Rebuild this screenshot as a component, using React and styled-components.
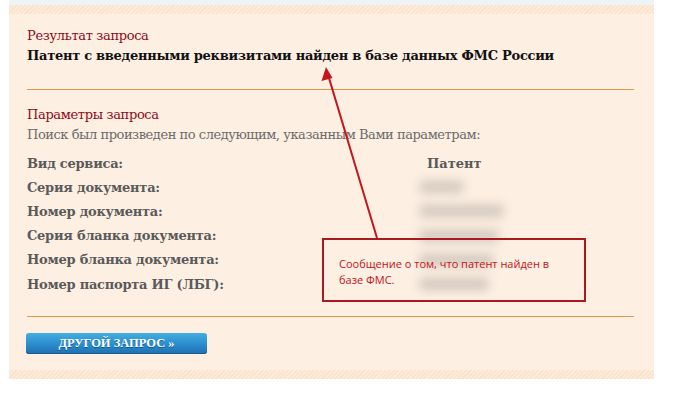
import React from 'react';
import styled, { createGlobalStyle } from 'styled-components';

const GlobalStyle = createGlobalStyle`
  html, body {
    margin: 0;
    padding: 0;
    background: #fff;
  }
`;

const hatch = `
  background: repeating-linear-gradient(
    -45deg,
    #fbe2cb 0px,
    #fbe2cb 1.5px,
    #fdebdc 1.5px,
    #fdebdc 3px
  );
`;

const Panel = styled.div`
  position: relative;
  width: 645px;
  margin-left: 9px;
  font-family: "DejaVu Serif", "Liberation Serif", serif;
`;

const TopStrip = styled.div`
  height: 5px;
  background: #eef3f5;
`;

const Hatch = styled.div`
  height: 9px;
  ${hatch}
`;

const Body = styled.div`
  background: #fdefe2;
  padding: 12px 20px 16px 18px;
`;

const SectionTitle = styled.div`
  color: #8c0c18;
  font-size: 13px;
  letter-spacing: -0.35px;
  line-height: 20px;
  margin-top: ${(p) => p.$top || 0}px;
`;

const ResultText = styled.div`
  color: #111;
  font-size: 13px;
  font-weight: bold;
  letter-spacing: -0.28px;
  line-height: 20px;
`;

const Divider = styled.div`
  height: 1px;
  background: #e39a48;
  margin-top: ${(p) => p.$top}px;
`;

const Hint = styled.div`
  color: #6b6b6b;
  font-size: 13px;
  letter-spacing: -0.45px;
  line-height: 19px;
`;

const Params = styled.div`
  display: grid;
  grid-template-columns: 400px 1fr;
  grid-auto-rows: 24.2px;
  margin-top: 7px;
  align-items: center;
`;

const Label = styled.div`
  color: #5a5a5a;
  font-size: 13px;
  font-weight: bold;
  letter-spacing: -0.25px;
`;

const Value = styled.div`
  color: #5a5a5a;
  font-size: 13px;
  font-weight: bold;
`;

const Blurred = styled.div`
  width: ${(p) => p.$w}px;
  height: 14px;
  margin-left: -8px;
  background: #d8cdc3;
  filter: blur(5px);
  border-radius: 5px;
`;

const Button = styled.button`
  display: block;
  margin: 16px 0 0 -1px;
  width: 181px;
  height: 21px;
  padding: 0 0 1px;
  border: none;
  border-radius: 3px;
  background: linear-gradient(#43aee0, #2a8ccc 55%, #1f6fae);
  box-shadow: inset 0 -1px 0 #1a5a92;
  color: #fff;
  font-family: "Liberation Serif", serif;
  font-size: 12.5px;
  font-weight: bold;
  text-shadow: 0 1px 0 rgba(0, 40, 80, 0.5);
  cursor: pointer;
`;

const Callout = styled.div`
  position: absolute;
  left: 313px;
  top: 238px;
  width: 260px;
  height: 60px;
  border: 2px solid #a81a1e;
  font-family: "Open Sans", "Noto Sans", sans-serif;
  font-size: 11px;
  line-height: 16px;
  color: #c4121a;
`;

const CalloutText = styled.div`
  padding: 16px 0 0 15px;
  width: 225px;
`;

const ArrowLayer = styled.svg`
  position: absolute;
  left: 0;
  top: 0;
  pointer-events: none;
`;

const rows = [
  ['Вид сервиса:', 'Патент'],
  ['Серия документа:', 45],
  ['Номер документа:', 85],
  ['Серия бланка документа:', 80],
  ['Номер бланка документа:', 75],
  ['Номер паспорта ИГ (ЛБГ):', 70],
];

export default function App() {
  return (
    <>
      <GlobalStyle />
      <Panel>
        <TopStrip />
        <Hatch />
        <Body>
          <SectionTitle>Результат запроса</SectionTitle>
          <ResultText>Патент с введенными реквизитами найден в базе данных ФМС России</ResultText>
          <Divider $top={23} />
          <SectionTitle $top={15}>Параметры запроса</SectionTitle>
          <Hint>Поиск был произведен по следующим, указанным Вами параметрам:</Hint>
          <Params>
            {rows.map(([label, val]) => (
              <React.Fragment key={label}>
                <Label>{label}</Label>
                {typeof val === 'string' ? <Value>{val}</Value> : <Blurred $w={val} />}
              </React.Fragment>
            ))}
          </Params>
          <Divider $top={20} />
          <Button>ДРУГОЙ ЗАПРОС »</Button>
        </Body>
        <Hatch />
        <Callout>
          <CalloutText>Сообщение о том, что патент найден в базе ФМС.</CalloutText>
        </Callout>
        <ArrowLayer width="645" height="378" viewBox="0 0 645 378">
          <line x1="368" y1="238" x2="320" y2="78" stroke="#c4141c" strokeWidth="2" />
          <polygon points="317,67 312.5,81 323.5,78" fill="#c4141c" />
        </ArrowLayer>
      </Panel>
    </>
  );
}
